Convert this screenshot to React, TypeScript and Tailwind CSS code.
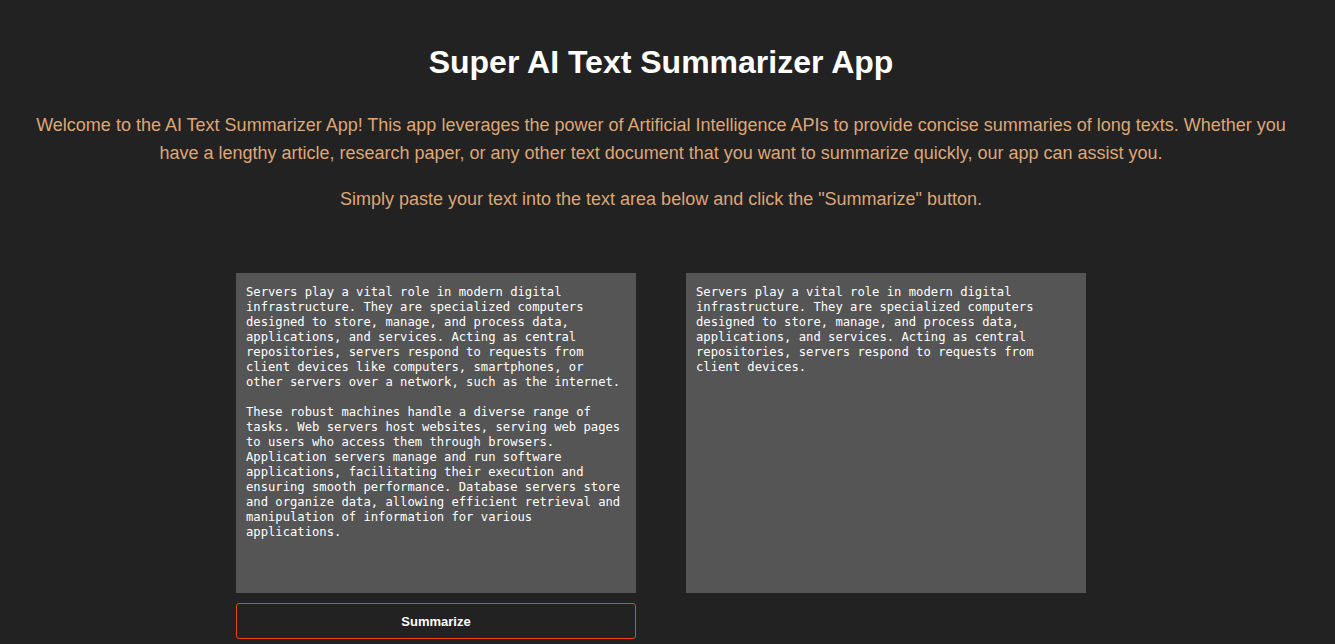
import { useState } from 'react'

const inputText = `Servers play a vital role in modern digital infrastructure. They are specialized computers designed to store, manage, and process data, applications, and services. Acting as central repositories, servers respond to requests from client devices like computers, smartphones, or other servers over a network, such as the internet.

These robust machines handle a diverse range of tasks. Web servers host websites, serving web pages to users who access them through browsers. Application servers manage and run software applications, facilitating their execution and ensuring smooth performance. Database servers store and organize data, allowing efficient retrieval and manipulation of information for various applications.`

const summaryText = `Servers play a vital role in modern digital infrastructure. They are specialized computers designed to store, manage, and process data, applications, and services. Acting as central repositories, servers respond to requests from client devices.`

const boxClass =
  "w-[400px] h-[320px] block resize-none bg-[#555555] text-white px-[10px] pt-[12px] pb-[8px] font-['DejaVu_Sans_Mono',monospace] text-[12.2px] leading-[15px] outline-none border-0"

export default function App() {
  const [text, setText] = useState(inputText)
  const [summary] = useState(summaryText)

  return (
    <div className="min-h-screen bg-[#222222] font-['Liberation_Sans',Arial,sans-serif]">
      <div className="w-[1322px] text-center pt-[44px]">
        <h1 className="text-[32px] leading-[37px] font-bold text-white">Super AI Text Summarizer App</h1>

        <div className="px-[20px] mt-[30px] text-[18px] leading-[28px] text-[#dfa677]">
          <p>
            Welcome to the AI Text Summarizer App! This app leverages the power of Artificial Intelligence APIs to
            provide concise summaries of long texts. Whether you have a lengthy article, research paper, or any other
            text document that you want to summarize quickly, our app can assist you.
          </p>
          <p className="mt-[18px]">
            Simply paste your text into the text area below and click the "Summarize" button.
          </p>
        </div>

        <div className="flex justify-center items-start gap-[50px] mt-[60px]">
          <div className="flex flex-col gap-[10px]">
            <textarea className={boxClass} value={text} onChange={(e) => setText(e.target.value)} />
            <button className="w-[400px] h-[36px] pt-[2px] rounded-[3px] border border-[#e5490f] bg-[#222222] text-white text-[13px] font-bold">
              Summarize
            </button>
          </div>
          <textarea className={boxClass} value={summary} readOnly />
        </div>
      </div>
    </div>
  )
}
